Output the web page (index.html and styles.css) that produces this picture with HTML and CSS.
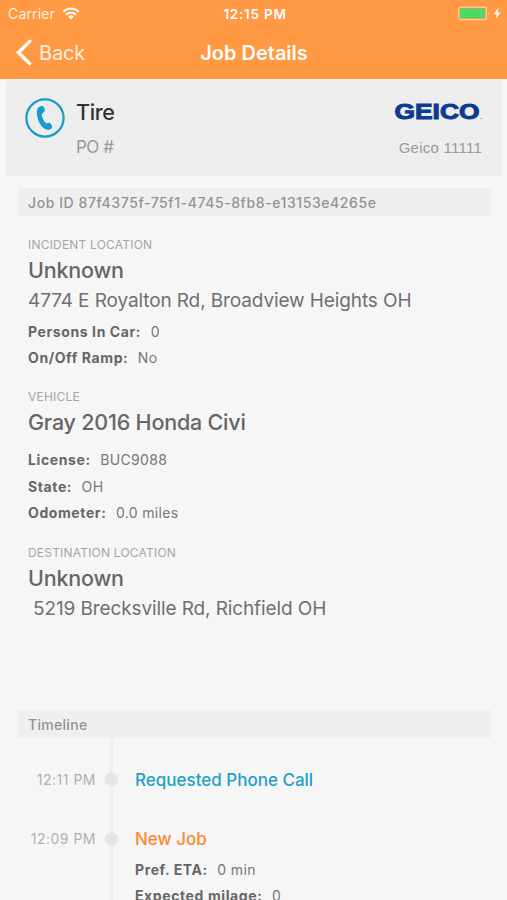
FILE: index.html
```html
<!DOCTYPE html>
<html lang="en">

<head>
  <meta charset="UTF-8">
  <meta name="viewport" content="width=device-width, initial-scale=1.0">
  <title>Job Details</title>
  <link rel="stylesheet" href="styles.css">
</head>

<body>

  <header class="header">
    <div class="status-bar">
      <div class="carrier">
        <span>Carrier</span>
        <svg width="18" height="13" viewBox="0 0 18 13">
          <path d="M1.2 4.8a11 11 0 0 1 15.6 0M4 7.8a7.1 7.1 0 0 1 10 0" fill="none" stroke="#fff" stroke-width="2.1" />
          <path d="M9 12.6L6.1 9.7a4.1 4.1 0 0 1 5.8 0z" fill="#fff" />
        </svg>
      </div>
      <div class="clock">12:15 PM</div>
      <div class="battery">
        <svg width="44" height="15" viewBox="0 0 44 15">
          <rect x="0.6" y="1.1" width="27.8" height="12.6" rx="2" fill="none" stroke="#ffcb9b" stroke-width="1.2" />
          <rect x="2" y="2.5" width="25" height="9.8" rx="0.8" fill="#4cd964" />
          <path d="M30 5.4q1.8 2 0 4z" fill="#ffcb9b" />
          <path d="M40.6 1.8L35.4 8.2h3.2L37.6 13l5-6.4h-3.1z" fill="#fff" />
        </svg>
      </div>
    </div>
    <nav class="nav-bar">
      <a class="back">
        <svg width="17" height="27" viewBox="0 0 17 27">
          <path d="M14.7 2.4L3.5 13.5l11.2 11.1" fill="none" stroke="#fff" stroke-width="3.4" stroke-linecap="round" />
        </svg>
        <span>Back</span>
      </a>
      <h1>Job Details</h1>
    </nav>
  </header>

  <section class="job-card">
    <svg class="phone" width="40" height="40" viewBox="0 0 40 40">
      <circle cx="20" cy="20" r="18.6" fill="none" stroke="#1a9cc9" stroke-width="2.2" />
      <path d="M12.6 10.4C13.6 8.4 16.6 7.4 18.4 8.4C19.6 10 20 12 19.6 13.4C18.8 14.8 17 14.8 16.8 16.2C16.8 19.4 18.6 22.8 20.8 25C22 25.8 23 24.2 24.6 24.8C26.2 25.8 27.2 27.6 27.2 29.2C26.4 31.2 24 32 22 31.8C17.4 30.6 14.2 25.8 12.8 20.8C11.8 17 11.4 13.2 12.6 10.4Z" fill="#1a9cc9" />
    </svg>
    <div class="job-name">
      <h2>Tire</h2>
      <p>PO #</p>
    </div>
    <div class="client">
      <svg width="90" height="20" viewBox="0 0 90 20">
        <text class="logo" x="2.5" y="17.3" textLength="85" lengthAdjust="spacingAndGlyphs">GEICO</text>
        <circle cx="89" cy="16.5" r="0.7" fill="#8b93ab" />
      </svg>
      <p>Geico 11111</p>
    </div>
  </section>

  <div class="bar job-id">Job ID 87f4375f-75f1-4745-8fb8-e13153e4265e</div>

  <main class="details">
    <section>
      <h3>INCIDENT LOCATION</h3>
      <h2>Unknown</h2>
      <p class="address">4774 E Royalton Rd, Broadview Heights OH</p>
      <dl>
        <div><dt>Persons In Car:</dt><dd>0</dd></div>
        <div><dt>On/Off Ramp:</dt><dd>No</dd></div>
      </dl>
    </section>
    <section>
      <h3>VEHICLE</h3>
      <h2>Gray 2016 Honda Civi</h2>
      <dl class="vehicle">
        <div><dt>License:</dt><dd>BUC9088</dd></div>
        <div><dt>State:</dt><dd>OH</dd></div>
        <div><dt>Odometer:</dt><dd>0.0 miles</dd></div>
      </dl>
    </section>
    <section>
      <h3>DESTINATION LOCATION</h3>
      <h2>Unknown</h2>
      <p class="address destination">5219 Brecksville Rd, Richfield OH</p>
    </section>
  </main>

  <div class="bar">Timeline</div>

  <ul class="timeline">
    <li>
      <time>12:11 PM</time>
      <span class="track"></span>
      <div class="event">
        <h4 class="call">Requested Phone Call</h4>
      </div>
    </li>
    <li>
      <time>12:09 PM</time>
      <span class="track"></span>
      <div class="event">
        <h4 class="new">New Job</h4>
        <dl>
          <div><dt>Pref. ETA:</dt><dd>0 min</dd></div>
          <div><dt>Expected milage:</dt><dd>0</dd></div>
        </dl>
      </div>
    </li>
  </ul>

</body>

</html>
```
FILE: styles.css
```css
* {
  box-sizing: border-box;
  margin: 0;
  padding: 0;
}

body {
  height: 900px;
  overflow: hidden;
  background-color: #f6f6f6;
  color: #666;
  font-family: Inter, "Liberation Sans", sans-serif;
}

svg {
  display: block;
}

/* header */
.header {
  height: 79px;
  background-color: #ff9944;
  color: #fff;
}

.status-bar {
  display: grid;
  grid-template-columns: 1fr auto 1fr;
  align-items: center;
  height: 27px;
  padding: 0 5px 0 8px;
  font-size: 14px;
}

.carrier {
  display: flex;
  align-items: center;
  gap: 7px;
  color: #fff0e2;
  letter-spacing: 0.15px;
}

.clock {
  font-weight: 600;
  font-size: 13.5px;
  letter-spacing: 0.75px;
}

.battery {
  justify-self: end;
}

.nav-bar {
  display: grid;
  grid-template-columns: 1fr auto 1fr;
  align-items: center;
  height: 51px;
  padding: 0 14px 0 15px;
}

.back {
  display: flex;
  align-items: center;
  gap: 7px;
  color: #fff0e2;
  font-size: 20px;
  letter-spacing: -0.2px;
}

.nav-bar h1 {
  font-size: 20px;
  font-weight: 600;
}

/* job card */
.job-card {
  display: flex;
  height: 96px;
  margin: 1px 5px 0 6px;
  padding: 18px 20px 0 19px;
  background-color: #ededed;
}

.job-name {
  margin-left: 11px;
}

.job-name h2 {
  color: #333;
  font-size: 21.5px;
  font-weight: 500;
  line-height: 28px;
  letter-spacing: -0.4px;
}

.job-name p {
  margin-top: 8px;
  color: #999;
  font-size: 17px;
  line-height: 26px;
  letter-spacing: -0.5px;
}

.client {
  display: flex;
  flex-direction: column;
  align-items: flex-end;
  margin-left: auto;
  padding-top: 4px;
}

.client p {
  margin-top: 15px;
  color: #999;
  font-family: "Liberation Sans", sans-serif;
  font-size: 15px;
  line-height: 22px;
  letter-spacing: 0.25px;
}

.logo {
  fill: #0c3b8f;
  stroke: #0c3b8f;
  stroke-width: 1px;
  font-family: "Liberation Sans", sans-serif;
  font-size: 22px;
  font-weight: 700;
}

/* grey title bars */
.bar {
  height: 28px;
  margin: 0 16px 0 18px;
  padding: 0 10px;
  background-color: #efefef;
  color: #939393;
  font-size: 14px;
  font-weight: 500;
  line-height: 29px;
  letter-spacing: 0.3px;
}

.job-id {
  margin-top: 12px;
  letter-spacing: 0.58px;
}

/* details */
.details {
  height: 494px;
  padding: 18.5px 28px 0;
}

.details section {
  margin-bottom: 16px;
}

.details h3 {
  color: #a5a5a5;
  font-size: 12px;
  font-weight: 400;
  line-height: 20px;
  letter-spacing: 0.2px;
}

.details h2 {
  font-size: 21.5px;
  font-weight: 500;
  line-height: 31px;
  margin-bottom: 1px;
  letter-spacing: -0.2px;
}

.address {
  color: #707070;
  font-size: 19px;
  line-height: 28px;
  letter-spacing: -0.11px;
}

.destination {
  padding-left: 5px;
}

dl {
  margin-top: 4px;
  font-size: 14px;
  line-height: 26.4px;
}

.details .vehicle {
  margin-top: 9px;
}

dl div {
  display: flex;
  gap: 9.5px;
}

dt {
  font-weight: 700;
  letter-spacing: 0.6px;
}

dd {
  color: #777;
  letter-spacing: 0.35px;
}

/* timeline */
.timeline {
  list-style: none;
}

.timeline li {
  display: grid;
  grid-template-columns: 96px 31px 1fr;
  min-height: 59px;
}

.timeline li:first-child {
  min-height: 71px;
}

.timeline li:first-child time,
.timeline li:first-child .event {
  padding-top: 27px;
}

.timeline time {
  padding-top: 15px;
  color: #b0b0b0;
  font-size: 14px;
  line-height: 30px;
  letter-spacing: 0.5px;
  text-align: right;
}

.track {
  display: block;
  background:
    radial-gradient(circle at 15.5px 30px, #e6e6e6 6.5px, transparent 7.2px),
    linear-gradient(#eee, #eee) 14px 0 / 3px 100% no-repeat;
}

.timeline li:first-child .track {
  background:
    radial-gradient(circle at 15.5px 41.5px, #e6e6e6 6.5px, transparent 7.2px),
    linear-gradient(#eee, #eee) 14px 0 / 3px 100% no-repeat;
}

.event {
  padding: 15px 0 0 8px;
}

.event h4 {
  font-size: 17px;
  font-weight: 500;
  line-height: 30px;
}

.event dl {
  margin-top: 3px;
  line-height: 26px;
}

.call {
  color: #1f9fca;
}

.new {
  color: #fb8a34;
}
```
